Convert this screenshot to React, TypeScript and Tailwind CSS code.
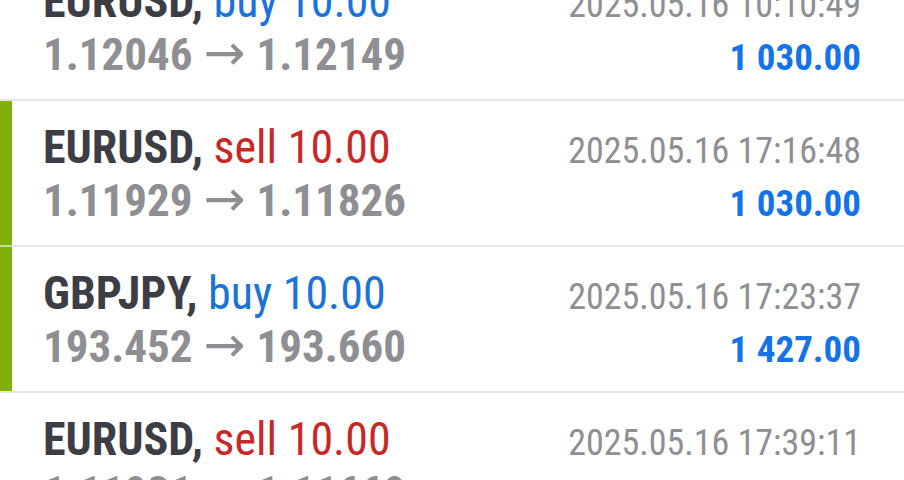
type Deal = {
  symbol: string;
  side: "buy" | "sell";
  volume: string;
  open: string;
  close: string;
  time: string;
  profit: string;
  marked: boolean;
};

const deals: Deal[] = [
  { symbol: "EURUSD", side: "buy", volume: "10.00", open: "1.12046", close: "1.12149", time: "2025.05.16 10:10:49", profit: "1 030.00", marked: false },
  { symbol: "EURUSD", side: "sell", volume: "10.00", open: "1.11929", close: "1.11826", time: "2025.05.16 17:16:48", profit: "1 030.00", marked: true },
  { symbol: "GBPJPY", side: "buy", volume: "10.00", open: "193.452", close: "193.660", time: "2025.05.16 17:23:37", profit: "1 427.00", marked: true },
  { symbol: "EURUSD", side: "sell", volume: "10.00", open: "1.11931", close: "1.11669", time: "2025.05.16 17:39:11", profit: "2 620.00", marked: false },
];

function DealRow({ deal }: { deal: Deal }) {
  return (
    <div className="flex h-[144px]">
      <div className={deal.marked ? "w-3 bg-[#7fb10a]" : "w-3"} />
      <div className="flex-1 pl-[31px] pr-[43px] pt-[20px]">
        <div className="flex h-[53px] items-baseline justify-between leading-[53px]">
          <div className="text-[46px]">
            <span className="font-bold text-[#3d3d45]">{deal.symbol},</span>{" "}
            <span className={deal.side === "sell" ? "text-[#c62828]" : "text-[#1a73d9]"}>
              {deal.side} {deal.volume}
            </span>
          </div>
          <div className="text-[36px] text-[#8e8e93]">{deal.time}</div>
        </div>
        <div className="flex h-[53px] items-baseline justify-between leading-[53px]">
          <div className="text-[45px] font-bold text-[#8e8e93]">
            {deal.open}
            <span className="mx-[11px] font-['DejaVu_Sans',sans-serif] text-[50px] leading-none font-normal font-stretch-normal">
              →
            </span>
            {deal.close}
          </div>
          <div className="text-[37px] font-bold text-[#1473e6]">{deal.profit}</div>
        </div>
      </div>
    </div>
  );
}

export default function App() {
  return (
    <div className="h-[480px] overflow-hidden bg-white font-['Roboto',sans-serif] font-stretch-condensed">
      <div className="-mt-[45px]">
        {deals.map((deal, i) => (
          <div key={i}>
            <DealRow deal={deal} />
            {i < deals.length - 1 && (
              <div className="flex h-[2px]">
                <div
                  className={
                    deal.marked && deals[i + 1].marked
                      ? "w-3 bg-[#c8df98]"
                      : "w-3 bg-[#e6e6e6]"
                  }
                />
                <div className="flex-1 bg-[#e6e6e6]" />
              </div>
            )}
          </div>
        ))}
      </div>
    </div>
  );
}
